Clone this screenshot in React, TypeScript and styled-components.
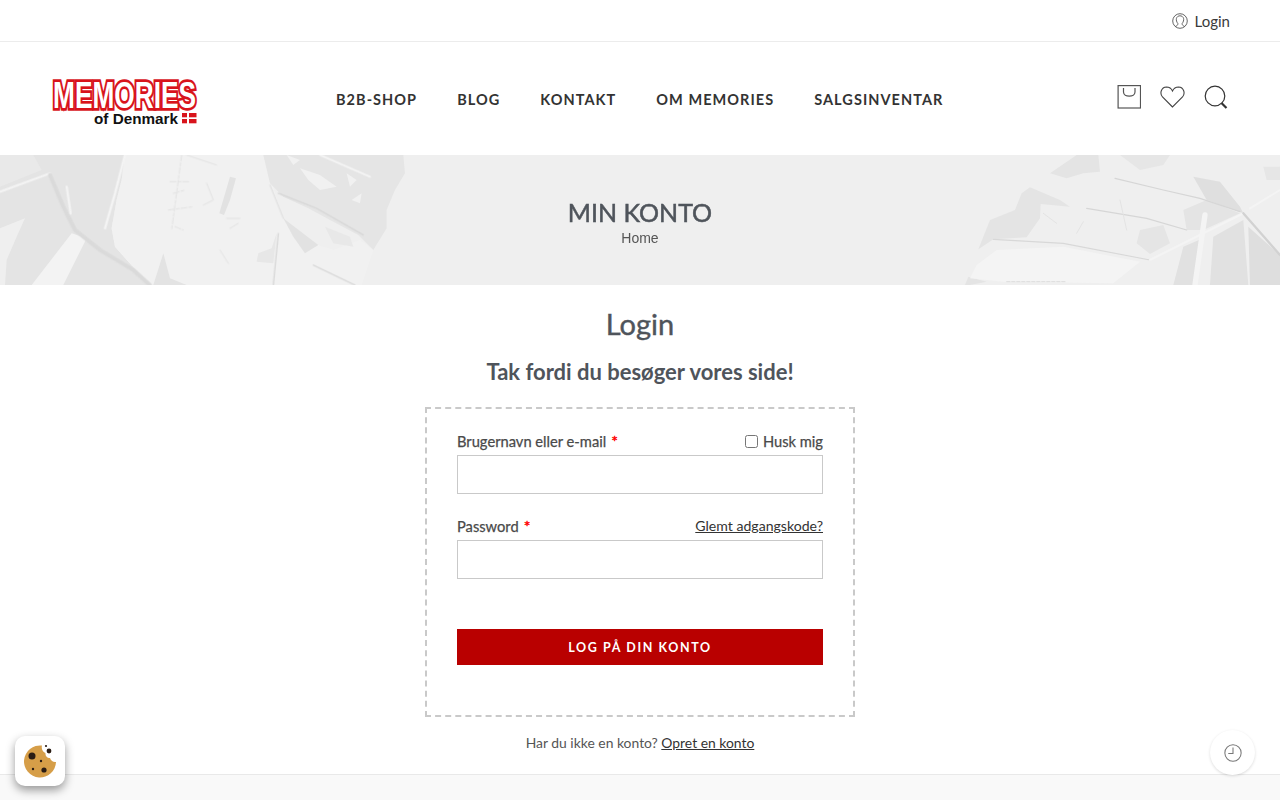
import React from 'react';
import styled, { createGlobalStyle } from 'styled-components';

const Global = createGlobalStyle`
  html, body { margin: 0; padding: 0; background: #fff; }
  body { font-family: "Lato", "Liberation Sans", sans-serif; color: #4f4f4f; height: 800px; overflow: hidden; }
  * { box-sizing: border-box; }
  a { text-decoration: none; }
`;

const Page = styled.div`
  position: relative;
  width: 1280px;
  height: 800px;
  overflow: hidden;
  display: flex;
  flex-direction: column;
`;

const TopBar = styled.div`
  height: 42px;
  border-bottom: 1px solid #ececec;
  display: flex;
  align-items: center;
  justify-content: flex-end;
  padding-right: 50px;
`;

const LoginLink = styled.a`
  display: flex;
  align-items: center;
  gap: 7px;
  font-size: 15px;
  color: #3a3a3a;
`;

const Header = styled.header`
  height: 113px;
  display: flex;
  align-items: center;
  padding: 0 52px 0 50px;
`;

const LogoBox = styled.div`
  width: 150px;
  height: 50px;
  margin-top: 4px;
  flex: none;
  svg { overflow: visible; display: block; }
`;

const Nav = styled.nav`
  display: flex;
  gap: 40px;
  margin-left: 136px;
  margin-top: 2px;
`;

const NavItem = styled.a`
  font-size: 14.5px;
  font-weight: 700;
  letter-spacing: 1.05px;
  color: #333;
  white-space: nowrap;
`;

const Icons = styled.div`
  margin-left: auto;
  display: flex;
  align-items: center;
  gap: 19px;
  margin-top: -4px;
`;

const Banner = styled.section`
  position: relative;
  height: 130px;
  background: #efefef;
  overflow: hidden;
  display: flex;
  flex-direction: column;
  align-items: center;
  padding-top: 41px;
`;

const LeafArt = styled.svg`
  position: absolute;
  inset: 0;
  width: 1280px;
  height: 130px;
`;

const BannerTitle = styled.h1`
  position: relative;
  margin: 0;
  font-size: 25px;
  line-height: 32px;
  font-weight: 400;
  -webkit-text-stroke: 0.5px #4f545b;
  color: #4f545b;
`;

const Crumb = styled.div`
  position: relative;
  font-family: "Liberation Sans", Arial, sans-serif;
  font-size: 14px;
  line-height: 20px;
  color: #555;
`;

const Main = styled.main`
  flex: 1;
  display: flex;
  flex-direction: column;
  align-items: center;
`;

const LoginTitle = styled.h2`
  margin: 21px 0 0;
  font-size: 29px;
  line-height: 36px;
  font-weight: 400;
  -webkit-text-stroke: 0.4px #4f545b;
  color: #4f545b;
`;

const Thanks = styled.h3`
  margin: 15px 0 0;
  font-size: 22px;
  line-height: 30px;
  font-weight: 700;
  color: #4f545b;
`;

const FormBox = styled.form`
  width: 430px;
  height: 310px;
  margin-top: 20px;
  border: 2px dashed #c9c9c9;
  padding: 18px 30px 0;
  display: flex;
  flex-direction: column;
`;

const LabelRow = styled.div`
  display: flex;
  justify-content: space-between;
  align-items: center;
  height: 28px;
  font-size: 14.7px;
  -webkit-text-stroke: 0.25px #4a4a4a;
  color: #4a4a4a;
`;

const Req = styled.span`
  color: #f00;
  -webkit-text-stroke: 0.4px #f00;
  font-size: 16px;
  line-height: 0;
  margin-left: 5px;
`;

const Remember = styled.label`
  display: flex;
  align-items: center;
  gap: 5px;
`;

const Check = styled.input`
  width: 13px;
  height: 13px;
  margin: 0;
`;

const Forgot = styled.a`
  -webkit-text-stroke: 0;
  color: #333;
  font-size: 14.1px;
  margin-bottom: 2px;
  text-decoration: underline;
`;

const Field = styled.input<{ $gap: number }>`
  display: block;
  width: 100%;
  height: 39px;
  border: 1px solid #c9c9c9;
  background: #fff;
  margin-bottom: ${p => p.$gap}px;
  outline: none;
`;

const Submit = styled.button`
  height: 36px;
  border: 0;
  background: #b90000;
  color: #fff;
  font-family: inherit;
  font-size: 12.5px;
  font-weight: 700;
  letter-spacing: 1.6px;
`;

const Register = styled.p`
  margin: 16px 0 0;
  font-size: 13.9px;
  line-height: 20px;
  color: #555;
`;

const RegisterLink = styled.a`
  color: #333;
  text-decoration: underline;
`;

const Footer = styled.footer`
  height: 26px;
  flex: none;
  background: #f9f9f9;
  border-top: 1px solid #e9e9e9;
`;

const CookieBtn = styled.div`
  position: absolute;
  left: 15px;
  top: 736px;
  width: 50px;
  height: 50px;
  border-radius: 10px;
  background: #fff;
  box-shadow: 0 4px 10px rgba(0,0,0,.4);
  display: flex;
  align-items: center;
  justify-content: center;
`;

const HistoryBtn = styled.div`
  position: absolute;
  left: 1210px;
  top: 730px;
  width: 45px;
  height: 45px;
  border-radius: 50%;
  background: #fff;
  box-shadow: 0 1px 3px rgba(0,0,0,.14);
  display: flex;
  align-items: center;
  justify-content: center;
`;

const RED = '#d8141c';

const Logo = () => (
  <svg width="150" height="50" viewBox="0 0 150 50">
    <text
      transform="translate(3 32) scale(1 1.25)"
      fontFamily="Liberation Sans"
      fontWeight="700"
      fontSize="30"
      textLength="143"
      lengthAdjust="spacingAndGlyphs"
      fill="#fff"
      stroke={RED}
      strokeWidth="4.4"
      paintOrder="stroke"
      strokeLinejoin="miter"
    >
      MEMORIES
    </text>
    <text x="44" y="47.5" fontFamily="Liberation Sans" fontWeight="700" fontSize="14.5" fill="#111" textLength="84" lengthAdjust="spacingAndGlyphs">of Denmark</text>
    <g fill={RED}>
      <rect x="132" y="37" width="5" height="4.3" /><rect x="139" y="37" width="7.5" height="4.3" />
      <rect x="132" y="43" width="5" height="4.3" /><rect x="139" y="43" width="7.5" height="4.3" />
    </g>
  </svg>
);

const Blotch = ({ d, c }: { d: string; c: string }) => <path d={d} fill={c} />;

const Leaves = () => (
  <LeafArt viewBox="0 0 1280 130">
    <defs>
      <filter id="soft"><feGaussianBlur stdDeviation="0.45" /></filter>
    </defs>
    <g filter="url(#soft)">
      <g transform="translate(0,-5) scale(0.3333)">
        <Blotch c="#e4e4e4" d="M0 15H375L365 90L350 150L335 235L345 290L385 335L450 405H0Z" />
        <Blotch c="#e9e9e9" d="M0 15H100L125 60L0 110Z" />
        <Blotch c="#efefef" d="M0 235L75 205L50 260L20 330L15 405H0Z" />
        <Blotch c="#f3f3f3" d="M215 250L260 265L190 405H95Z" />
        <Blotch c="#f1f1f1" d="M375 15H790L815 100L850 205L880 260L915 310L955 285L1000 300L1080 270L1120 300L1085 405H450L385 335L345 290L335 235L350 150L365 90Z" />
        <Blotch c="#e5e5e5" d="M790 15H1210L1215 70L1185 120L1160 180L1160 235L1120 300L1075 255L1000 215L925 175L850 140L810 100Z" />
        <Blotch c="#f1f1f1" d="M900 55L960 75L1010 110L960 120L925 90ZM860 15L900 30L880 45ZM1040 70L1070 90L1050 110ZM1055 150L1085 130L1080 160Z" />
        <Blotch c="#e2e2e2" d="M850 205L955 285L915 310L880 260Z" />
        <Blotch c="#e3e3e3" d="M490 310L460 405H560L510 385Z" />
        <Blotch c="#e2e2e2" d="M690 80L708 85L690 150L672 195L658 190Z" />
        <Blotch c="#e7e7e7" d="M775 310L815 295L830 250L820 340L770 335Z" />
        <Blotch c="#e8e8e8" d="M975 230L1050 260L1060 290L1000 280Z" />
      </g>
      <g transform="translate(830,-5) scale(0.3333)">
        <Blotch c="#e4e4e4" d="M740 15H805L810 65L760 70L710 85L660 70Z" />
        <Blotch c="#e4e4e4" d="M600 112L690 150L720 170L632 162L630 205L590 262L490 268L445 298L480 210L555 180L575 130Z" />
        <Blotch c="#e6e6e6" d="M1300 50H1350V90H1310Z" />
        <Blotch c="#e6e6e6" d="M870 15H1020L1000 45L930 60Z" />
        <Blotch c="#dfdfdf" d="M1090 80L1170 95L1230 170L1240 190L1130 150Z" />
        <Blotch c="#e4e4e4" d="M1060 180L1130 150L1230 190L1120 240L1070 240Z" />
        <Blotch c="#e1e1e1" d="M1030 405L1060 290L1112 268L1095 405Z" />
        <Blotch c="#e1e1e1" d="M1140 405L1150 260L1240 210L1255 405Z" />
        <Blotch c="#dedede" d="M1260 405L1255 230L1350 315V405Z" />
        <Blotch c="#e5e5e5" d="M930 240L1000 225L1020 280L960 312L920 280Z" />
        <Blotch c="#e5e5e5" d="M790 325L820 330L855 385L825 375Z" />
        <Blotch c="#e4e4e4" d="M405 405L415 380L470 395L420 405Z" />
        <Blotch c="#f4f4f4" d="M440 345L500 300L700 290L930 335L850 400L520 395L420 385Z" />
      </g>
    </g>
    <g fill="none" strokeLinecap="round">
      <g transform="translate(0,-5) scale(0.3333)">
        <path d="M0 125L150 70" stroke="#f3f3f3" strokeWidth="7" />
        <path d="M150 75L190 170L225 240L300 300L400 360L450 405" stroke="#dadada" strokeWidth="12" />
        <path d="M200 110L212 190" stroke="#f3f3f3" strokeWidth="7" />
        <path d="M375 15L345 130L315 235" stroke="#f4f4f4" strokeWidth="7" />
        <path d="M545 15L515 240M510 95H570M505 180L580 170M520 130L555 120M525 230L550 240" stroke="#e2e2e2" strokeWidth="3" strokeDasharray="18 6 9 5" />
        <path d="M960 15L1110 80" stroke="#f4f4f4" strokeWidth="6" />
        <path d="M810 105L850 205" stroke="#dcdcdc" strokeWidth="3" />
        <path d="M835 130L950 175L1090 255" stroke="#d6d6d6" strokeWidth="4" />
        <path d="M835 250L820 405" stroke="#d4d4d4" strokeWidth="3.5" />
        <path d="M940 345L1065 405" stroke="#d4d4d4" strokeWidth="3.5" />
        <path d="M680 205H720M690 235L715 220M620 100L640 150L610 165" stroke="#e2e2e2" strokeWidth="3" />
        <path d="M660 300L685 340M560 15L650 45" stroke="#e3e3e3" strokeWidth="3" />
      </g>
      <g transform="translate(830,-5) scale(0.3333)">
        <path d="M855 85L1000 120L1110 145L1230 185" stroke="#d6d6d6" strokeWidth="3.5" />
        <path d="M770 175L950 205L1070 240" stroke="#d6d6d6" strokeWidth="3.5" />
        <path d="M490 268L700 280L960 330" stroke="#d8d8d8" strokeWidth="3.5" />
        <path d="M960 330L1200 210L1240 190" stroke="#f4f4f4" strokeWidth="6" />
        <path d="M1240 190L1350 315" stroke="#d2d2d2" strokeWidth="7" />
        <path d="M1125 195L1095 405" stroke="#f4f4f4" strokeWidth="16" />
        <path d="M1350 120L1260 175" stroke="#f4f4f4" strokeWidth="6" />
        <path d="M530 395H710" stroke="#dcdcdc" strokeWidth="3" strokeDasharray="10 5" />
        <path d="M640 190L680 220M870 150L890 240M760 215L740 250" stroke="#e3e3e3" strokeWidth="3" />
      </g>
    </g>
  </LeafArt>
);

const CookieIcon = () => (
  <svg width="34" height="34" viewBox="0 0 34 34">
    <path d="M19 1.6A16 16 0 1 0 33 18C30.5 18.5 28 17 27 14C24.5 14.5 22 12 22.5 9C20 8 18 5 19 1.6Z" fill="#d69e48" />
    <g fill="#2a1c14">
      <circle cx="9" cy="12" r="3.5" />
      <circle cx="18" cy="17" r="1.2" />
      <circle cx="21" cy="26" r="2.6" />
      <circle cx="10" cy="25" r="1.2" />
      <circle cx="26" cy="7" r="2.4" />
      <circle cx="23" cy="2" r="1.1" />
    </g>
  </svg>
);

export default function App() {
  return (
    <Page>
      <Global />
      <TopBar>
        <LoginLink href="#">
          <svg width="16" height="16" viewBox="0 0 16 16" fill="none" stroke="#555" strokeWidth="0.9">
            <circle cx="8" cy="8" r="7.3" />
            <path d="M3.4 13.4C5 12.8 5.9 12 5.9 10.6C4.6 9 4.1 7 4.4 5.6C4.8 3.6 6.5 2.8 8 2.8C9.5 2.8 11.2 3.6 11.6 5.6C11.9 7 11.4 9 10.1 10.6C10.1 12 11 12.8 12.6 13.4" />
          </svg>
          Login
        </LoginLink>
      </TopBar>
      <Header>
        <LogoBox><Logo /></LogoBox>
        <Nav>
          <NavItem>B2B-SHOP</NavItem>
          <NavItem>BLOG</NavItem>
          <NavItem>KONTAKT</NavItem>
          <NavItem>OM MEMORIES</NavItem>
          <NavItem>SALGSINVENTAR</NavItem>
        </Nav>
        <Icons>
          <svg width="24" height="24" viewBox="0 0 24 24" fill="none" stroke="#555" strokeWidth="1.2">
            <rect x="1.1" y="0.6" width="22.4" height="22.4" />
            <path d="M6.5 3V7C6.5 12.6 18 12.6 18 7V3" />
          </svg>
          <svg width="25" height="22" viewBox="0 0 25 22" fill="none" stroke="#444" strokeWidth="1.1">
            <path d="M12.5 21L2.5 11C-0.5 7.5 1 1.2 6.5 1C9.5 1 11.5 2.8 12.5 5C13.5 2.8 15.5 1 18.5 1C24 1.2 25.5 7.5 22.5 11Z" />
          </svg>
          <svg width="24" height="24" viewBox="0 0 24 24" fill="none" stroke="#333">
            <circle cx="11" cy="11" r="9.8" strokeWidth="1.2" />
            <path d="M17.5 18L22.5 23" strokeWidth="2.2" />
          </svg>
        </Icons>
      </Header>
      <Banner>
        <Leaves />
        <BannerTitle>MIN KONTO</BannerTitle>
        <Crumb>Home</Crumb>
      </Banner>
      <Main>
        <LoginTitle>Login</LoginTitle>
        <Thanks>Tak fordi du besøger vores side!</Thanks>
        <FormBox onSubmit={e => e.preventDefault()}>
          <LabelRow>
            <span>Brugernavn eller e-mail<Req>*</Req></span>
            <Remember><Check type="checkbox" />Husk mig</Remember>
          </LabelRow>
          <Field type="text" $gap={18} />
          <LabelRow>
            <span>Password<Req>*</Req></span>
            <Forgot href="#">Glemt adgangskode?</Forgot>
          </LabelRow>
          <Field type="password" $gap={50} />
          <Submit type="submit">LOG PÅ DIN KONTO</Submit>
        </FormBox>
        <Register>Har du ikke en konto? <RegisterLink href="#">Opret en konto</RegisterLink></Register>
      </Main>
      <Footer />
      <CookieBtn><CookieIcon /></CookieBtn>
      <HistoryBtn>
        <svg width="18" height="18" viewBox="0 0 19 19" fill="none" stroke="#777" strokeWidth="1.1">
          <circle cx="9.5" cy="9.5" r="8.6" />
          <path d="M9.5 3.8V10H4.5" />
        </svg>
      </HistoryBtn>
    </Page>
  );
}
